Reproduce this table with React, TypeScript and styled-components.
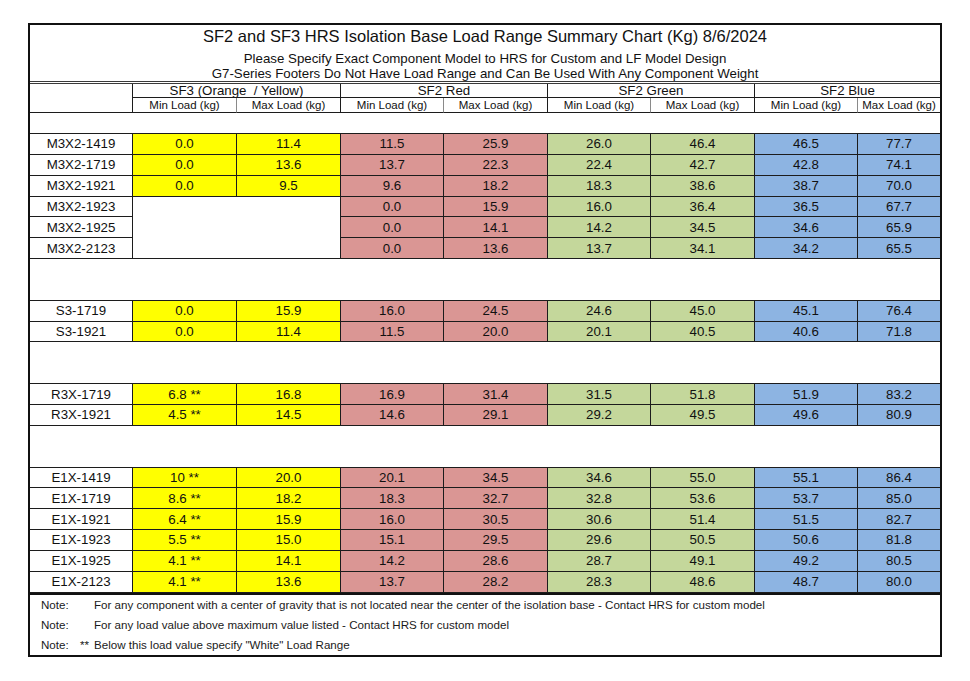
import React from "react";
import styled, { createGlobalStyle } from "styled-components";

const GlobalStyle = createGlobalStyle`
  html, body {
    margin: 0;
    padding: 0;
    background: #fff;
  }
  body {
    font-family: "Liberation Sans", Arial, sans-serif;
    color: #111;
  }
`;

const COLS = "103px 104px 104px 103px 104px 103px 104px 103px 82px";
const LINE = "#1c1c1c";

const YELLOW = "#ffff00";
const RED = "#da9694";
const GREEN = "#c4d79b";
const BLUE = "#8db4e2";

const Page = styled.div`
  padding: 23px 0 0 28px;
`;

const Frame = styled.div`
  width: 914px;
  box-sizing: border-box;
  border: 2px solid #111;
  display: flex;
  flex-direction: column;
`;

const TitleBlock = styled.div`
  display: flex;
  flex-direction: column;
  align-items: center;
  height: 56px;
  border-bottom: 3px double #3a3a3a;
`;

const Title = styled.div`
  font-size: 16.5px;
  line-height: 22px;
  color: #111;
  margin-bottom: 4px;
`;

const Subtitle = styled.div`
  font-size: 13.3px;
  line-height: 15px;
  color: #111;
`;

const HeaderGrid = styled.div`
  display: grid;
  grid-template-columns: ${COLS};
  grid-template-rows: 14px 15px;
`;

const HeadCell = styled.div<{ $span?: number; $tall?: boolean; $soft?: boolean; $last?: boolean; $small?: boolean }>`
  grid-column: span ${(p) => p.$span || 1};
  grid-row: span ${(p) => (p.$tall ? 2 : 1)};
  box-sizing: border-box;
  border-right: ${(p) => (p.$last ? "none" : `1px solid ${p.$soft ? "#8a8a8a" : LINE}`)};
  border-bottom: 1px solid ${LINE};
  display: flex;
  align-items: center;
  justify-content: center;
  font-size: ${(p) => (p.$small ? "11.5px" : "13.3px")};
  line-height: 13px;
  white-space: pre;
  overflow: hidden;
`;

const Spacer = styled.div<{ $h: number }>`
  height: ${(p) => p.$h}px;
`;

const Group = styled.div`
  display: grid;
  grid-template-columns: ${COLS};
  grid-auto-rows: 20.85px;
  border-top: 1px solid ${LINE};
`;

const Cell = styled.div<{ $bg?: string; $last?: boolean }>`
  box-sizing: border-box;
  background: ${(p) => p.$bg || "#fff"};
  border-right: ${(p) => (p.$last ? "none" : `1px solid ${LINE}`)};
  border-bottom: 1px solid ${LINE};
  display: flex;
  align-items: center;
  justify-content: center;
  font-size: 13.3px;
  color: #111;
  white-space: pre;
`;

const BlankMerge = styled.div<{ $rowStart: number; $rows: number }>`
  grid-column: 2 / span 2;
  grid-row: ${(p) => p.$rowStart} / span ${(p) => p.$rows};
  box-sizing: border-box;
  background: #fff;
  border-right: 1px solid ${LINE};
  border-bottom: 1px solid ${LINE};
`;

const Notes = styled.div`
  border-top: 2px solid #111;
  display: flex;
  flex-direction: column;
`;

const NoteRow = styled.div`
  display: flex;
  align-items: center;
  height: 20.1px;
  font-size: 11.6px;
  color: #1a1a1a;
`;

const NoteLabel = styled.span`
  width: 64px;
  box-sizing: border-box;
  padding: 0 5px 0 11px;
  display: flex;
  justify-content: space-between;
`;

type Row = {
  model: string;
  sf3?: [string, string];
  red: [string, string];
  green: [string, string];
  blue: [string, string];
};

const groups: Row[][] = [
  [
    { model: "M3X2-1419", sf3: ["0.0", "11.4"], red: ["11.5", "25.9"], green: ["26.0", "46.4"], blue: ["46.5", "77.7"] },
    { model: "M3X2-1719", sf3: ["0.0", "13.6"], red: ["13.7", "22.3"], green: ["22.4", "42.7"], blue: ["42.8", "74.1"] },
    { model: "M3X2-1921", sf3: ["0.0", "9.5"], red: ["9.6", "18.2"], green: ["18.3", "38.6"], blue: ["38.7", "70.0"] },
    { model: "M3X2-1923", red: ["0.0", "15.9"], green: ["16.0", "36.4"], blue: ["36.5", "67.7"] },
    { model: "M3X2-1925", red: ["0.0", "14.1"], green: ["14.2", "34.5"], blue: ["34.6", "65.9"] },
    { model: "M3X2-2123", red: ["0.0", "13.6"], green: ["13.7", "34.1"], blue: ["34.2", "65.5"] },
  ],
  [
    { model: "S3-1719", sf3: ["0.0", "15.9"], red: ["16.0", "24.5"], green: ["24.6", "45.0"], blue: ["45.1", "76.4"] },
    { model: "S3-1921", sf3: ["0.0", "11.4"], red: ["11.5", "20.0"], green: ["20.1", "40.5"], blue: ["40.6", "71.8"] },
  ],
  [
    { model: "R3X-1719", sf3: ["6.8 **", "16.8"], red: ["16.9", "31.4"], green: ["31.5", "51.8"], blue: ["51.9", "83.2"] },
    { model: "R3X-1921", sf3: ["4.5 **", "14.5"], red: ["14.6", "29.1"], green: ["29.2", "49.5"], blue: ["49.6", "80.9"] },
  ],
  [
    { model: "E1X-1419", sf3: ["10 **", "20.0"], red: ["20.1", "34.5"], green: ["34.6", "55.0"], blue: ["55.1", "86.4"] },
    { model: "E1X-1719", sf3: ["8.6 **", "18.2"], red: ["18.3", "32.7"], green: ["32.8", "53.6"], blue: ["53.7", "85.0"] },
    { model: "E1X-1921", sf3: ["6.4 **", "15.9"], red: ["16.0", "30.5"], green: ["30.6", "51.4"], blue: ["51.5", "82.7"] },
    { model: "E1X-1923", sf3: ["5.5 **", "15.0"], red: ["15.1", "29.5"], green: ["29.6", "50.5"], blue: ["50.6", "81.8"] },
    { model: "E1X-1925", sf3: ["4.1 **", "14.1"], red: ["14.2", "28.6"], green: ["28.7", "49.1"], blue: ["49.2", "80.5"] },
    { model: "E1X-2123", sf3: ["4.1 **", "13.6"], red: ["13.7", "28.2"], green: ["28.3", "48.6"], blue: ["48.7", "80.0"] },
  ],
];

const notes = [
  { mark: "", text: "For any component with a center of gravity that is not located near the center of the isolation base - Contact HRS for custom model" },
  { mark: "", text: "For any load value above maximum value listed - Contact HRS for custom model" },
  { mark: "**", text: "Below this load value specify \"White\" Load Range" },
];

function DataGroup({ rows }: { rows: Row[] }) {
  const firstBlank = rows.findIndex((r) => !r.sf3);
  const blankCount = rows.filter((r) => !r.sf3).length;
  return (
    <Group>
      {firstBlank >= 0 && <BlankMerge $rowStart={firstBlank + 1} $rows={blankCount} />}
      {rows.map((r) => (
        <React.Fragment key={r.model}>
          <Cell>{r.model}</Cell>
          {r.sf3 && <Cell $bg={YELLOW}>{r.sf3[0]}</Cell>}
          {r.sf3 && <Cell $bg={YELLOW}>{r.sf3[1]}</Cell>}
          <Cell $bg={RED}>{r.red[0]}</Cell>
          <Cell $bg={RED}>{r.red[1]}</Cell>
          <Cell $bg={GREEN}>{r.green[0]}</Cell>
          <Cell $bg={GREEN}>{r.green[1]}</Cell>
          <Cell $bg={BLUE}>{r.blue[0]}</Cell>
          <Cell $bg={BLUE} $last>{r.blue[1]}</Cell>
        </React.Fragment>
      ))}
    </Group>
  );
}

export default function App() {
  const subs = ["SF3", "Red", "Green", "Blue"];
  return (
    <Page>
      <GlobalStyle />
      <Frame>
        <TitleBlock>
          <Title>SF2 and SF3 HRS Isolation Base Load Range Summary Chart (Kg) 8/6/2024</Title>
          <Subtitle>Please Specify Exact Component Model to HRS for Custom and LF Model Design</Subtitle>
          <Subtitle>G7-Series Footers Do Not Have Load Range and Can Be Used With Any Component Weight</Subtitle>
        </TitleBlock>

        <HeaderGrid>
          <HeadCell $tall />
          <HeadCell $span={2}>SF3 (Orange  / Yellow)</HeadCell>
          <HeadCell $span={2}>SF2 Red</HeadCell>
          <HeadCell $span={2}>SF2 Green</HeadCell>
          <HeadCell $span={2} $last>SF2 Blue</HeadCell>
          {subs.map((s, i) => (
            <React.Fragment key={s}>
              <HeadCell $small $soft>Min Load (kg)</HeadCell>
              <HeadCell $small $last={i === subs.length - 1}>Max Load (kg)</HeadCell>
            </React.Fragment>
          ))}
        </HeaderGrid>

        <Spacer $h={20} />
        {groups.map((g, i) => (
          <React.Fragment key={i}>
            {i > 0 && <Spacer $h={40.7} />}
            <DataGroup rows={g} />
          </React.Fragment>
        ))}

        <Notes>
          {notes.map((n, i) => (
            <NoteRow key={i}>
              <NoteLabel>
                <span>Note:</span>
                <span>{n.mark}</span>
              </NoteLabel>
              <span>{n.text}</span>
            </NoteRow>
          ))}
        </Notes>
      </Frame>
    </Page>
  );
}
